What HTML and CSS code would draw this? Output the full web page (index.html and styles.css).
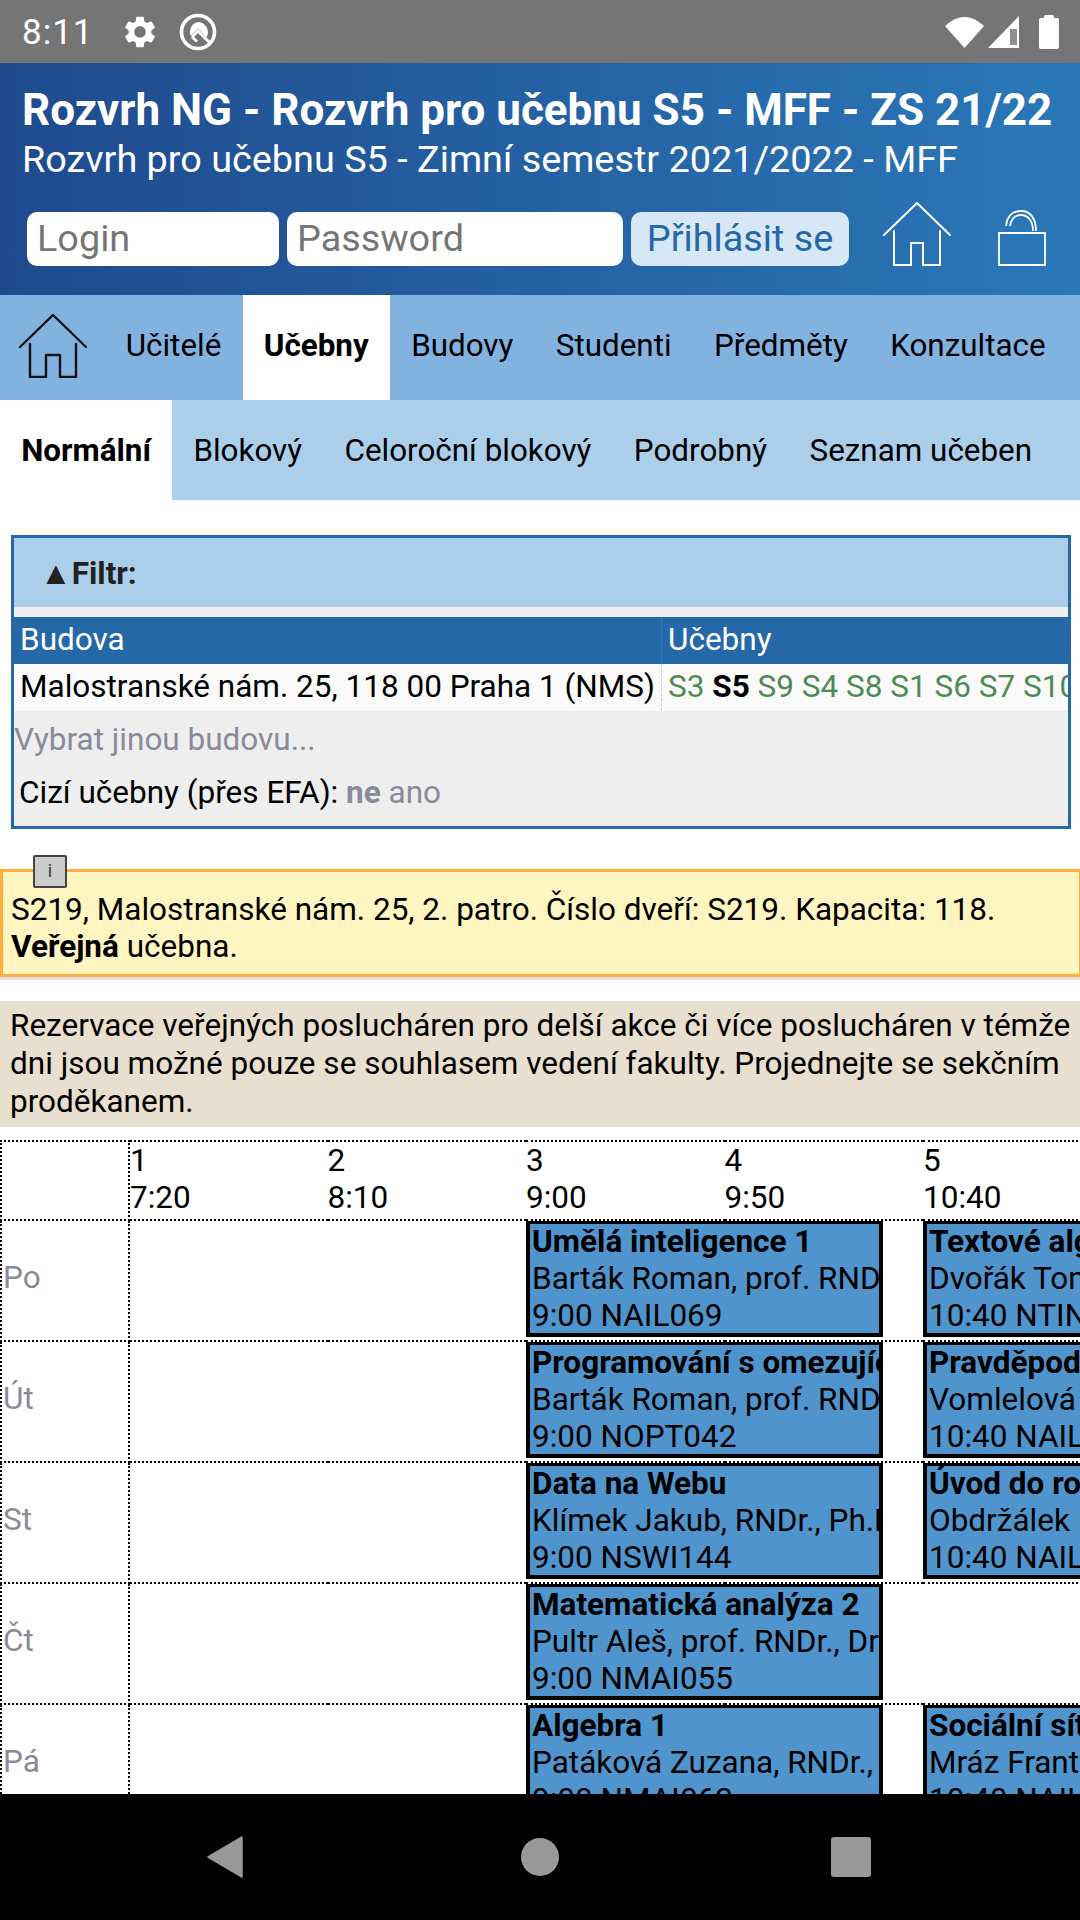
FILE: index.html
```html
<!DOCTYPE html>
<html lang="cs">
<head>
    <meta charset="UTF-8">
    <title>Rozvrh NG - Rozvrh pro učebnu S5 - MFF - ZS 21/22</title>
    <link rel="stylesheet" href="styles.css">
</head>
<body>
    <div class="status-bar">
        <span class="clock">8:11</span>
        <svg class="gear" viewBox="0 0 24 24"><path fill="#fff" d="M19.14 12.94c.04-.3.06-.61.06-.94 0-.32-.02-.64-.07-.94l2.03-1.58c.18-.14.23-.41.12-.61l-1.92-3.32c-.12-.22-.37-.29-.59-.22l-2.39.96c-.5-.38-1.03-.7-1.62-.94l-.36-2.54c-.04-.24-.24-.41-.48-.41h-3.84c-.24 0-.43.17-.47.41l-.36 2.54c-.59.24-1.13.57-1.62.94l-2.39-.96c-.22-.08-.47 0-.59.22L2.74 8.87c-.12.21-.08.47.12.61l2.03 1.58c-.05.3-.09.63-.09.94s.02.64.07.94l-2.03 1.58c-.18.14-.23.41-.12.61l1.92 3.32c.12.22.37.29.59.22l2.39-.96c.5.38 1.03.7 1.62.94l.36 2.54c.05.24.24.41.48.41h3.84c.24 0 .44-.17.47-.41l.36-2.54c.59-.24 1.13-.56 1.62-.94l2.39.96c.22.08.47 0 .59-.22l1.92-3.32c.12-.22.07-.47-.12-.61l-2.01-1.58zM12 15.6c-1.98 0-3.6-1.62-3.6-3.6s1.62-3.6 3.6-3.6 3.6 1.62 3.6 3.6-1.62 3.6-3.6 3.6z"/></svg>
        <svg class="q-logo" viewBox="0 0 38 38">
            <circle cx="19" cy="19" r="16.5" fill="none" stroke="#fff" stroke-width="3.6"/>
            <path fill="#fff" d="M19 9a10 10 0 0 1 10 10c0 2-.6 3.8-1.6 5.3L19 15.6l-7.2 7.2A10 10 0 0 1 19 9z"/>
            <path fill="none" stroke="#fff" stroke-width="3" d="M13 24l6-6 11 11M13 24l5 4.5"/>
        </svg>
        <span class="status-space"></span>
        <svg class="wifi" viewBox="0 0 40 34"><path fill="#fff" d="M0 11Q19.500-7 39 11L19.500 33Z"/></svg>
        <svg class="signal" viewBox="0 0 32 32"><path fill="#fff" d="M0 32L31 0V32Z"/><path fill="#8f8f8f" d="M22 13h7v16h-7z"/></svg>
        <svg class="battery" viewBox="0 0 20 34"><path fill="#fff" d="M5 3V1.500Q5 0 6.500 0h7Q15 0 15 1.500V3h3Q20 3 20 5v27q0 2-2 2H2q-2 0-2-2V5q0-2 2-2z"/></svg>
    </div>

    <header class="site-header">
        <div class="site-title">Rozvrh NG - Rozvrh pro učebnu S5 - MFF - ZS 21/22</div>
        <div class="site-subtitle">Rozvrh pro učebnu S5 - Zimní semestr 2021/2022 - MFF</div>
        <div class="login-row">
            <div class="field field-login">Login</div>
            <div class="field field-password">Password</div>
            <div class="login-button">Přihlásit se</div>
            <svg class="icon-home-white" viewBox="0 0 68 64"><path d="M1 33L34 1l33 32M11 29v34h17V41h12v22h17V29" fill="none" stroke="#fff" stroke-width="2" stroke-linejoin="round" stroke-linecap="round"/></svg>
            <svg class="icon-lock" viewBox="0 0 48 60"><path d="M1 27h46v32H1zM8 20C9 10 15 5 23 5c9 0 15 7 15 20M12 20c1-7 5-11 11-11 7 0 12 6 12 16" fill="none" stroke="#fff" stroke-width="1.800"/></svg>
        </div>
    </header>

    <nav class="main-nav">
        <a class="nav-home"><svg viewBox="0 0 68 64"><path d="M1 33L34 1l33 32M11 30v33h16V41h14v22h16V30" fill="none" stroke="#111" stroke-width="2.400" stroke-linejoin="round" stroke-linecap="round"/></svg></a>
        <a class="nav-item">Učitelé</a>
        <a class="nav-item active">Učebny</a>
        <a class="nav-item">Budovy</a>
        <a class="nav-item">Studenti</a>
        <a class="nav-item">Předměty</a>
        <a class="nav-item">Konzultace</a>
    </nav>

    <nav class="sub-nav">
        <a class="nav-item active">Normální</a>
        <a class="nav-item">Blokový</a>
        <a class="nav-item">Celoroční blokový</a>
        <a class="nav-item">Podrobný</a>
        <a class="nav-item">Seznam učeben</a>
    </nav>

    <main class="content">
        <section class="filter">
            <div class="filter-head"><span class="filter-arrow">▲</span>Filtr:</div>
            <div class="filter-table">
                <div class="filter-row filter-row-head">
                    <div class="col-building">Budova</div>
                    <div class="col-rooms">Učebny</div>
                </div>
                <div class="filter-row">
                    <div class="col-building">Malostranské nám. 25, 118 00 Praha 1 (NMS)</div>
                    <div class="col-rooms rooms"><span>S3</span> <b>S5</b> <span>S9</span> <span>S4</span> <span>S8</span> <span>S1</span> <span>S6</span> <span>S7</span> <span>S10</span></div>
                </div>
            </div>
            <div class="filter-other">Vybrat jinou budovu...</div>
            <div class="filter-foreign">Cizí učebny (přes EFA): <b>ne</b> <span>ano</span></div>
        </section>

        <section class="info-box">
            <div class="info-toggle">i</div>
            S219, Malostranské nám. 25, 2. patro. Číslo dveří: S219. Kapacita: 118.<br>
            <b>Veřejná</b> učebna.
        </section>

        <section class="notice">Rezervace veřejných poslucháren pro delší akce či více poslucháren v témže dni jsou možné pouze se souhlasem vedení fakulty. Projednejte se sekčním proděkanem.</section>

        <table class="timetable">
            <colgroup>
                <col class="col-day">
                <col class="col-hour"><col class="col-hour"><col class="col-hour"><col class="col-hour"><col class="col-hour"><col class="col-hour">
            </colgroup>
            <tr class="hours">
                <td class="day"></td>
                <td>1<br>7:20</td>
                <td>2<br>8:10</td>
                <td>3<br>9:00</td>
                <td>4<br>9:50</td>
                <td>5<br>10:40</td>
                <td></td>
            </tr>
            <tr>
                <td class="day">Po</td><td></td><td></td>
                <td colspan="2"><div class="event"><b>Umělá inteligence 1</b><br>Barták Roman, prof. RNDr., Ph.D.<br>9:00 NAIL069</div></td>
                <td colspan="2"><div class="event"><b>Textové algoritmy</b><br>Dvořák Tomáš, doc. RNDr.<br>10:40 NTIN</div></td>
            </tr>
            <tr>
                <td class="day">Út</td><td></td><td></td>
                <td colspan="2"><div class="event"><b>Programování s omezujícími</b><br>Barták Roman, prof. RNDr., Ph.D.<br>9:00 NOPT042</div></td>
                <td colspan="2"><div class="event"><b>Pravděpodobnost</b><br>Vomlelová Marta, Mgr.<br>10:40 NAIL</div></td>
            </tr>
            <tr>
                <td class="day">St</td><td></td><td></td>
                <td colspan="2"><div class="event"><b>Data na Webu</b><br>Klímek Jakub, RNDr., Ph.D.<br>9:00 NSWI144</div></td>
                <td colspan="2"><div class="event"><b>Úvod do robotiky</b><br>Obdržálek David, RNDr.<br>10:40 NAIL</div></td>
            </tr>
            <tr>
                <td class="day">Čt</td><td></td><td></td>
                <td colspan="2"><div class="event"><b>Matematická analýza 2</b><br>Pultr Aleš, prof. RNDr., DrSc.<br>9:00 NMAI055</div></td>
                <td colspan="2"></td>
            </tr>
            <tr>
                <td class="day">Pá</td><td></td><td></td>
                <td colspan="2"><div class="event"><b>Algebra 1</b><br>Patáková Zuzana, RNDr., Ph.D.<br>9:00 NMAI062</div></td>
                <td colspan="2"><div class="event"><b>Sociální sítě</b><br>Mráz František, RNDr.<br>10:40 NAIL</div></td>
            </tr>
        </table>
    </main>

    <div class="android-nav">
        <svg class="nav-back" viewBox="0 0 36 42"><path fill="#999" d="M35 1v40L1 21z" stroke="#999" stroke-width="1.500" stroke-linejoin="round"/></svg>
        <div class="nav-circle"></div>
        <div class="nav-square"></div>
    </div>
</body>
</html>
```

FILE: styles.css
```css
* {
    box-sizing: border-box;
}

html, body {
    margin: 0;
    height: 1920px;
    overflow: hidden;
}

body {
    display: flex;
    flex-direction: column;
    font-family: Roboto, sans-serif;
    font-size: 31.5px;
    line-height: 36.7px;
    color: #000;
    background-color: #fff;
}

/* Android status bar */
.status-bar {
    height: 63px;
    flex: none;
    display: flex;
    align-items: center;
    padding: 0 21px 0 22px;
    background-color: #757575;
}

.clock {
    color: #fff;
    font-size: 35px;
    letter-spacing: 1px;
    width: 99px;
    padding-top: 3px;
}

.gear {
    width: 38px;
    height: 38px;
}

.q-logo {
    width: 38px;
    height: 38px;
    margin-left: 20px;
}

.status-space {
    flex: 1;
}

.wifi {
    width: 40px;
    height: 34px;
}

.signal {
    width: 32px;
    height: 32px;
    margin-left: 3px;
}

.battery {
    width: 20px;
    height: 34px;
    margin-left: 19px;
}

/* Page header */
.site-header {
    height: 232px;
    flex: none;
    padding: 25px 22px 0;
    color: #fff;
    background: linear-gradient(to right, #1f4a8e, #2a78b8);
}

.site-title {
    font-size: 44px;
    line-height: 44px;
    font-weight: bold;
    white-space: nowrap;
}

.site-subtitle {
    margin-top: 3px;
    font-size: 37.8px;
    line-height: 48px;
    white-space: nowrap;
}

.login-row {
    display: flex;
    align-items: flex-end;
    margin: 19px 0 0 5px;
}

.field {
    height: 54px;
    background-color: #fff;
    border-radius: 10px;
    color: #757575;
    font-size: 37.8px;
    line-height: 52px;
    padding-left: 10px;
}

.field-login {
    width: 252px;
}

.field-password {
    width: 336px;
    margin-left: 8px;
}

.login-button {
    width: 218px;
    height: 54px;
    margin-left: 8px;
    border-radius: 10px;
    background-color: #d6e7f5;
    color: #2568a8;
    font-size: 37.8px;
    line-height: 52px;
    text-align: center;
}

.icon-home-white {
    width: 68px;
    height: 64px;
    margin-left: 34px;
}

.icon-lock {
    width: 48px;
    height: 60px;
    margin-left: 47px;
}

/* Navigation */
.main-nav, .sub-nav {
    flex: none;
    display: flex;
    font-size: 31.4px;
}

.main-nav {
    height: 105px;
    background-color: #82b3e0;
}

.sub-nav {
    height: 100px;
    background-color: #abcfea;
}

.nav-home {
    width: 104.5px;
    padding: 19px 0 0 19px;
}

.nav-home svg {
    width: 68px;
    height: 64px;
}

.nav-item {
    padding: 0 21.2px;
    line-height: 102px;
    white-space: nowrap;
}

.nav-item.active {
    background-color: #fff;
    font-weight: bold;
}

.content {
    flex: 1;
    min-height: 0;
    overflow: hidden;
}

.filter {
    margin: 35px 9px 0 11px;
    height: 294px;
    border: 3px solid #2568a8;
    background-color: #eee;
    overflow: hidden;
}

.filter-head {
    height: 69px;
    padding-left: 26px;
    background-color: #abcfea;
    color: #222;
    font-weight: bold;
    line-height: 70px;
}

.filter-arrow {
    font-size: 32px;
}

.filter-table {
    margin-top: 10px;
}

.filter-row {
    display: flex;
    height: 47px;
    line-height: 46px;
    background-color: #fafafa;
    white-space: nowrap;
}

.filter-row-head {
    background-color: #2568a8;
    color: #fff;
}

.col-building {
    width: 648px;
    padding-left: 6px;
    border-right: 1px dashed #ccc;
}

.filter-row-head .col-building {
    border-right: 1px solid #2a78b8;
}

.col-rooms {
    padding-left: 6px;
    flex: 1;
    overflow: hidden;
}

.rooms span {
    color: #4f8a55;
}

.filter-other {
    color: #8a8a99;
    margin-top: 11px;
}

.filter-foreign {
    margin-top: 16px;
    padding-left: 5px;
}

.filter-foreign b, .filter-foreign span {
    color: #8a8a99;
}

.info-box {
    position: relative;
    height: 108px;
    margin-top: 40px;
    padding: 20px 8px 0;
    border: 3px solid #ffad3d;
    border-right-width: 1px;
    background-color: #fef5c0;
    box-shadow: 0 3px 0 #e0e0e0;
}

/* leans out over the top edge of the box */
.info-toggle {
    position: absolute;
    left: 30px;
    top: -17px;
    width: 34px;
    height: 33px;
    border: 2px solid #444;
    border-radius: 2px;
    background-color: #ccc;
    color: #333;
    font-size: 18px;
    line-height: 28px;
    text-align: center;
}

.notice {
    height: 126px;
    margin-top: 24px;
    padding: 6px 0 0 10px;
    background-color: #e9dfcf;
    line-height: 38px;
}

/* Timetable */
.timetable {
    table-layout: fixed;
    width: 1319px;
    margin-top: 13px;
    border-collapse: collapse;
}

.col-day {
    width: 128px;
}

.col-hour {
    width: 198.5px;
}

.timetable td {
    height: 121px;
    padding: 0;
    border-top: 2px dotted #000;
    border-bottom: 2px dotted #000;
    vertical-align: top;
}

.timetable .hours td {
    height: 79px;
    padding: 1px 0 0;
}

.timetable .day {
    padding: 0 0 4px 1px;
    border-left: 2px dotted #000;
    border-right: 2px dotted #000;
    color: #8a8a99;
    vertical-align: middle;
}

.event {
    height: 116px;
    width: 357px;
    padding: 0 2px;
    border: 4px solid #000;
    border-top-width: 3px;
    background-color: #4f94cd;
    line-height: 36.8px;
    white-space: nowrap;
    overflow: hidden;
}

/* Android navigation bar */
.android-nav {
    height: 126px;
    flex: none;
    display: flex;
    align-items: center;
    background-color: #000;
    padding-left: 207px;
}

.nav-back {
    width: 36px;
    height: 42px;
}

.nav-circle {
    width: 38px;
    height: 38px;
    margin-left: 278px;
    border-radius: 50%;
    background-color: #999;
}

.nav-square {
    width: 40px;
    height: 40px;
    margin-left: 272px;
    border-radius: 3px;
    background-color: #999;
}
```
